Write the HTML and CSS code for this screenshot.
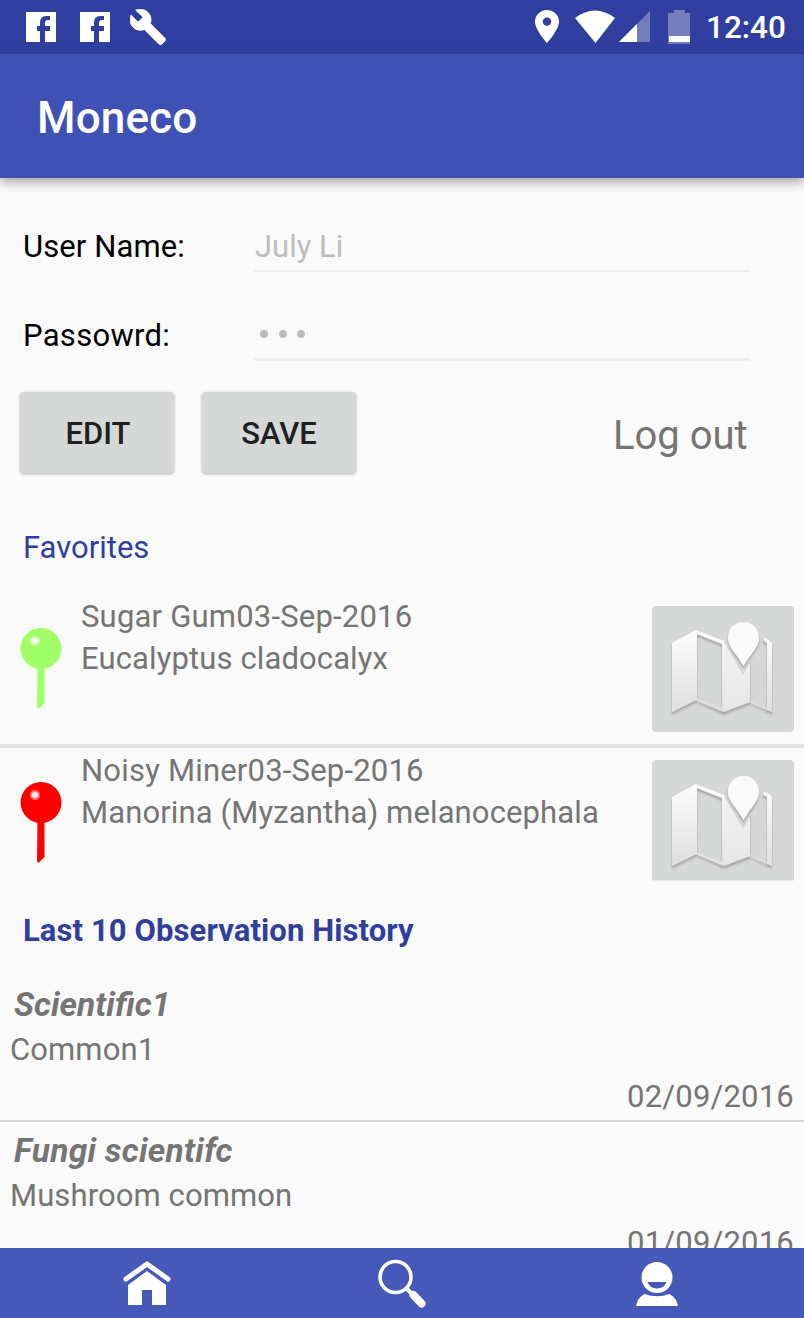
FILE: index.html
```html
<!DOCTYPE html>
<html lang="en">
<head>
<meta charset="utf-8">
<title>Moneco</title>
<link rel="stylesheet" href="styles.css">
</head>
<body>
<svg class="defs" width="0" height="0">
  <defs>
    <linearGradient id="paper" x1="0" y1="0" x2="0" y2="1">
      <stop offset="0" stop-color="#fdfdfd"/><stop offset="1" stop-color="#dfdfdf"/>
    </linearGradient>
    <filter id="soft" x="-20%" y="-20%" width="140%" height="150%">
      <feDropShadow dx="0" dy="2.5" stdDeviation="1" flood-color="#000" flood-opacity=".25"/>
    </filter>
    <symbol id="map" viewBox="0 0 142 126">
      <g filter="url(#soft)">
        <path fill="url(#paper)" fill-rule="evenodd" d="M20 37L44 24L72 35L98 25L117 34L120 37V106L98 96L72 106L44 94L20 106ZM45 28V93L70 102V38ZM98 36V95L115 102V37L109 33Z"/>
      </g>
      <path fill="#d6d8d7" d="M91 69L72 36Q72 13 92 13Q112 13 112 34Z"/>
      <path fill="#ececec" d="M72 37L91 69L97 58V96L72 105Z" opacity=".65"/>
      <g filter="url(#soft)">
        <path fill="#fafafa" d="M91.500 16C82 16 76 23 76 32C76 41 85 48 91.500 60C98 48 107 41 107 32C107 23 101 16 91.500 16Z"/>
      </g>
    </symbol>
    <symbol id="pin" viewBox="0 0 42 82">
      <path fill="currentColor" d="M17.500 38H24.500V75L18.500 81L17 79Z"/>
      <circle cx="21" cy="20.500" r="20.500" fill="currentColor"/>
      <circle cx="15" cy="13" r="5" fill="#fff" opacity=".45"/>
      <circle cx="15" cy="13" r="3" fill="#fff" opacity=".85"/>
    </symbol>
    <symbol id="facebook" viewBox="0 0 30 30">
      <path fill="#fff" d="M0 0H30V30H19V19H24V14H19V11Q19 8 22 8H24V4H20Q14 4 14 11V14H11V19H14V30H0Z"/>
    </symbol>
  </defs>
</svg>
<div class="screen">
  <header class="status">
    <svg class="fb" width="30" height="30"><use href="#facebook"/></svg>
    <svg class="fb" width="30" height="30"><use href="#facebook"/></svg>
    <svg class="wrench" width="36" height="36" viewBox="1 1 22 22"><path fill="#fff" stroke="#fff" stroke-width=".5" stroke-linejoin="round" d="M22.500 19l-9.100-9.100c.9-2.300.4-5-1.500-6.900-2-2-5-2.400-7.400-1.300L9 6 6 9 1.600 4.700C.4 7.100.9 10.100 2.900 12.100c1.900 1.900 4.600 2.400 6.900 1.500l9.100 9.100c.4.400 1 .4 1.400 0l2.100-2.300c.5-.4.500-1.100.1-1.400z"/></svg>
    <svg class="place" width="24" height="33" viewBox="5 2 14 20" preserveAspectRatio="none"><path fill="#fff" d="M12 2C8.130 2 5 5.130 5 9c0 5.250 7 13 7 13s7-7.750 7-13c0-3.870-3.130-7-7-7zm0 9.500a2.500 2.500 0 0 1 0-5 2.500 2.500 0 0 1 0 5z"/></svg>
    <svg class="wifi" width="40" height="33"><path fill="#fff" d="M0 8Q20-7 40 8L20.500 33Z"/></svg>
    <svg class="signal" width="31" height="31"><path fill="#757cbb" d="M31 0V31H0Z"/><path fill="#fff" d="M18 13V31H0Z"/></svg>
    <svg class="battery" width="22" height="34"><path fill="#757cbb" d="M0 3H6V0H17V3H22V34H0Z"/><path fill="#fff" d="M1 26H22V32H1Z"/></svg>
    <span class="clock">12:40</span>
  </header>
  <div class="appbar"><span class="title">Moneco</span></div>
  <main class="content">
    <div class="field first"><label class="label">User Name:</label><div class="input">July Li</div></div>
    <div class="field second"><label class="label wide">Passowrd:</label><div class="input pass"><i class="dot"></i><i class="dot"></i><i class="dot"></i></div></div>
    <div class="actions"><button class="btn">EDIT</button><button class="btn save">SAVE</button><span class="logout">Log out</span></div>
    <h2 class="favorites">Favorites</h2>
    <section class="fav one">
      <svg class="pin green" width="42" height="82"><use href="#pin"/></svg>
      <div class="desc"><div class="name">Sugar Gum03-Sep-2016</div><div class="latin">Eucalyptus cladocalyx</div></div>
      <div class="mapbtn"><svg width="142" height="126"><use href="#map"/></svg></div>
    </section>
    <section class="fav two">
      <svg class="pin red" width="42" height="82"><use href="#pin"/></svg>
      <div class="desc"><div class="name">Noisy Miner03-Sep-2016</div><div class="latin">Manorina (Myzantha) melanocephala</div></div>
      <div class="mapbtn cut"><svg width="142" height="126"><use href="#map"/></svg></div>
    </section>
    <h2 class="history">Last 10 Observation History</h2>
    <section class="obs"><div class="sci">Scientific1</div><div class="common">Common1</div><div class="date">02/09/2016</div></section>
    <section class="obs"><div class="sci fungi">Fungi scientifc</div><div class="common">Mushroom common</div><div class="date">01/09/2016</div></section>
  </main>
  <nav class="nav">
    <svg class="home" width="50" height="46"><path fill="none" stroke="#fff" stroke-width="5" stroke-linecap="round" d="M4 19L25 4L46 19"/><path fill="#fff" d="M6 25L25 11L44 25V45H30V30H20V45H6Z"/></svg>
    <svg class="search" width="50" height="50"><circle cx="17.500" cy="18" r="15.500" fill="none" stroke="#fff" stroke-width="3.600"/><path stroke="#fff" stroke-width="4" d="M28 29L34 35"/><path stroke="#fff" stroke-width="8" stroke-linecap="round" d="M35.500 36L43.500 44.500"/></svg>
    <svg class="user" width="42" height="45"><circle cx="21" cy="15.500" r="15.500" fill="#fff"/><path fill="#4659b8" d="M11.500 20H30.500Q28 26.500 21 26.500Q14 26.500 11.500 20Z"/><path fill="#fff" d="M0 44Q2 35 8.500 32Q21 36.500 33.500 32Q40 35 42 44Z"/></svg>
  </nav>
</div>
</body>
</html>
```
FILE: styles.css
```css
* { box-sizing: border-box; }
body { margin: 0; background: #fafafa; font-family: Roboto, sans-serif; font-size: 31px; color: #757575; }
svg { display: block; flex: none; }
.defs { position: absolute; }
.screen { width: 804px; height: 1318px; display: flex; flex-direction: column; overflow: hidden; white-space: nowrap; }
.status { height: 54px; flex: none; background: #303e9f; display: flex; align-items: flex-start; padding-left: 26px; }
.fb { margin: 12px 24px 0 0; }
.wrench { margin: 9px 0 0 -4px; }
.place { margin: 10px 0 0 369px; }
.wifi { margin: 10px 0 0 16px; }
.signal { margin: 11px 0 0 4px; }
.battery { margin: 10px 0 0 18px; }
.clock { margin-left: 16px; font-size: 31.5px; line-height: 56px; height: 54px; font-weight: 500; color: #fff; }
.appbar { height: 124px; flex: none; background: #3f51b5; padding-left: 37px; position: relative; box-shadow: 0 4px 10px rgba(0,0,0,.35); }
.title { color: #fff; font-weight: 500; font-size: 44px; line-height: 129px; letter-spacing: .15px; }
.content { flex: 1; min-height: 0; overflow: hidden; }
.field { display: flex; line-height: 42px; padding-left: 23px; }
.first { padding-top: 48px; height: 94px; }
.second { padding-top: 43px; height: 89px; }
.label { width: 231px; color: #000; letter-spacing: .1px; }
.label.wide { letter-spacing: .3px; }
.input { width: 496px; border-bottom: 2px solid #f0f0f0; color: #bdbdbd; padding-left: 1px; }
.second .input { border-bottom-width: 3px; }
.pass { display: flex; gap: 10.500px; padding: 15px 0 0 6px; }
.dot { width: 8px; height: 8px; border-radius: 50%; background: #bdbdbd; }
.actions { display: flex; padding: 31px 0 0 20px; height: 144px; }
.btn { width: 154px; height: 81px; padding: 3px 0 0 2px; margin-right: 28px; border: 0; border-radius: 4px; background: #d6d8d7; box-shadow: 0 1px 3px rgba(0,0,0,.3); font: 500 31px/38px Roboto, sans-serif; color: #202020; }
.btn.save { padding-left: 0; }
.logout { margin-left: 229px; font-size: 40px; line-height: 87px; }
h2 { margin: 0; padding-left: 23px; font-size: 31px; line-height: 40px; color: #303f9f; }
.favorites { font-weight: 400; height: 78px; padding-top: 23px; }
.fav { display: flex; padding-left: 20px; line-height: 42.500px; }
.one { height: 165px; border-bottom: 4px solid #e5e5e5; }
.two { height: 154px; }
.pin { margin-top: 45px; }
.two .pin { margin-top: 34px; }
.green { color: #a0ff66; }
.red { color: #f00; }
.desc { width: 571px; margin-left: 19px; padding-top: 12.500px; }
.two .desc { padding-top: 1.500px; }
.name { letter-spacing: .2px; }
.latin { letter-spacing: .12px; }
.mapbtn { width: 142px; height: 126px; margin-top: 23px; border-radius: 4px; background: #d6d8d7; overflow: hidden; }
.mapbtn.cut { margin-top: 12px; height: 121px; border-radius: 4px 4px 0 0; border-bottom: 1px solid #ececec; }
.history { height: 74px; padding-top: 9px; font-weight: 700; letter-spacing: .1px; }
.obs { height: 146px; padding: 7px 10px 0; border-bottom: 2px solid #d9d9d9; }
.sci { padding-left: 4px; font-size: 33.5px; line-height: 44px; font-weight: 700; font-style: italic; }
.sci.fungi { letter-spacing: .25px; }
.common { line-height: 45px; letter-spacing: .1px; }
.date { line-height: 49px; text-align: right; letter-spacing: .2px; }
.nav { height: 70px; flex: none; background: #4659b8; display: flex; align-items: flex-start; position: relative; }
.home { margin: 12px 0 0 122px; }
.search { margin: 11px 0 0 206px; }
.user { margin: 14px 0 0 208px; }
```
